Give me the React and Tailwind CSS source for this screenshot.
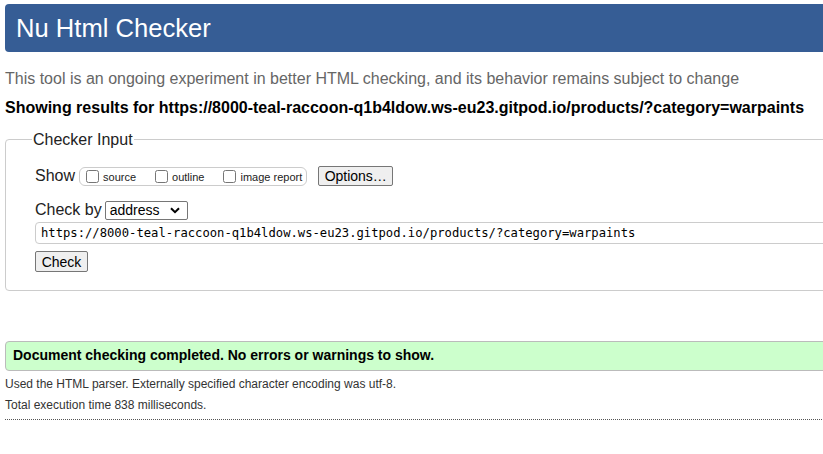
import React from "react";

function CheckOption({ label }) {
  return (
    <label className="flex items-center mr-[19px] last:mr-[4px]">
      <input type="checkbox" className="w-[13px] h-[13px] m-0 mr-[4px]" />
      <span className="text-[11px] leading-none pt-[2px]">{label}</span>
    </label>
  );
}

export default function App() {
  const url =
    "https://8000-teal-raccoon-q1b4ldow.ws-eu23.gitpod.io/products/?category=warpaints";

  return (
    <div className="w-[823px] h-[454px] overflow-hidden bg-white text-[#222] font-['Liberation_Sans',Arial,sans-serif]">
      <div className="w-[1000px] pl-[5px] pt-[4px]">
        {/* header */}
        <h1 className="h-[48px] bg-[#365d95] rounded-[4px] text-white text-[25.6px] pl-[11px] flex items-center">
          Nu Html Checker
        </h1>

        <p className="mt-[18px] text-[16px] leading-[18px] text-[#666]">
          This tool is an ongoing experiment in better HTML checking, and its behavior remains subject to change
        </p>
        <p className="mt-[11px] text-[16px] leading-[18px] font-bold text-black">
          Showing results for {url}
        </p>

        {/* checker input */}
        <fieldset className="mt-[13px] border border-[#ccc] rounded-[4px] pl-[29px] pb-[16px]">
          <legend className="text-[16px] leading-[18px] -ml-[3px] px-[1px] pt-[1px] text-[#222]">Checker Input</legend>

          <div className="mt-[17px] flex items-center h-[20px]">
            <span className="text-[16px] mr-[4px]">Show</span>
            <div className="h-[19px] border border-[#ccc] rounded-[6px] flex items-center pl-[6px]">
              <CheckOption label="source" />
              <CheckOption label="outline" />
              <CheckOption label="image report" />
            </div>
            <button className="ml-[11px] h-[20px] w-[75px] bg-[#efefef] border border-[#767676] rounded-[2px] text-[14px] leading-none text-black">
              Options…
            </button>
          </div>

          <div className="mt-[14px] flex items-center h-[20px]">
            <span className="text-[16px] mr-[3px]">Check by</span>
            <div className="h-[19px] w-[83px] border border-[#767676] rounded-[2px] flex items-center justify-between pl-[4px] pr-[7px] text-[14px] text-black">
              <span>address</span>
              <svg width="10" height="7" viewBox="0 0 10 7" fill="none">
                <path d="M1 1.2l4 4 4-4" stroke="#000" strokeWidth="2" />
              </svg>
            </div>
          </div>

          <div className="mt-[2px] h-[22px] border border-[#ccc] rounded-l-[4px] flex items-center pl-[5px] font-['DejaVu_Sans_Mono',monospace] text-[12.2px] text-black">
            {url}
          </div>

          <button className="mt-[7px] h-[21px] w-[53px] bg-[#efefef] border border-[#767676] rounded-[2px] text-[14px] leading-none text-black">
            Check
          </button>
        </fieldset>

        {/* result */}
        <div className="mt-[50px] h-[30px] bg-[#ccffcc] border border-[#bbb] rounded-l-[4px] flex items-center pl-[7px] text-[14px] font-bold text-black">
          Document checking completed. No errors or warnings to show.
        </div>

        <p className="mt-[6px] text-[12px] leading-[14px] text-[#333]">
          Used the HTML parser. Externally specified character encoding was utf-8.
        </p>
        <p className="mt-[7px] text-[12px] leading-[14px] text-[#333]">
          Total execution time 838 milliseconds.
        </p>
        <div className="mt-[7px] border-t border-dotted border-[#555]" />
      </div>
    </div>
  );
}
